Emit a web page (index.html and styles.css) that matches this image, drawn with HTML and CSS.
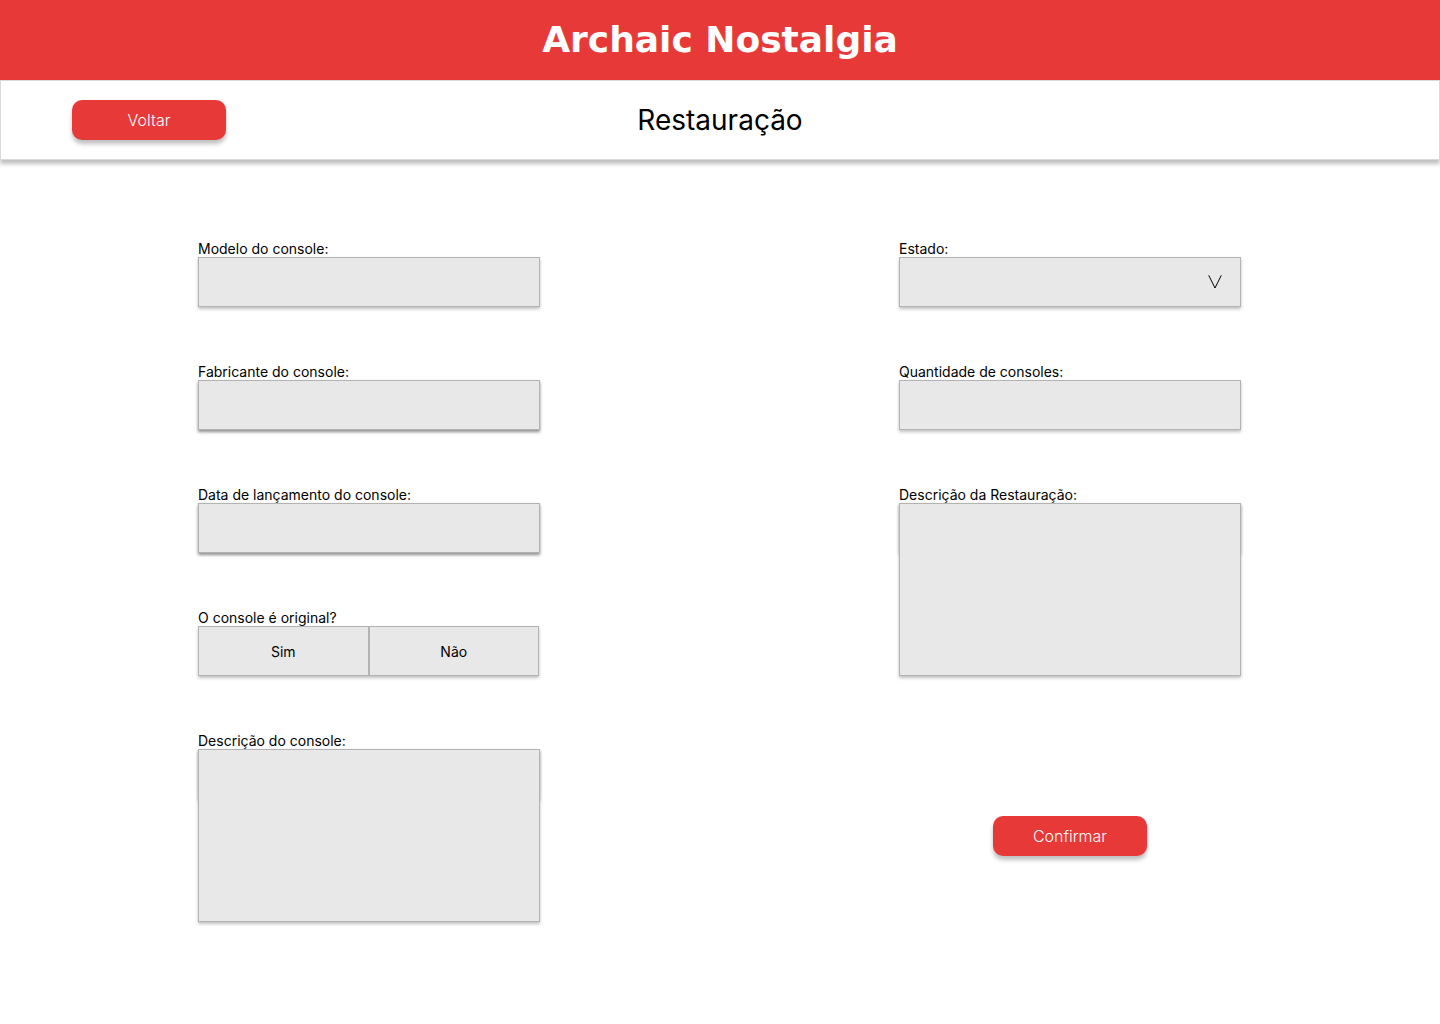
FILE: index.html
```html
<!DOCTYPE html>
<html lang="pt-BR">
<head>
  <meta charset="utf-8">
  <meta name="viewport" content="width=device-width, initial-scale=1">
  <title>Archaic Nostalgia - Restauração</title>
  <link rel="stylesheet" href="styles.css">
</head>
<body>
  <header class="brand">Archaic Nostalgia</header>
  <nav class="toolbar">
    <button class="button" type="button">Voltar</button>
    <h1 class="page-title">Restauração</h1>
  </nav>
  <main>
    <form class="form">
      <div class="column">
        <div class="field">
          <label for="modelo">Modelo do console:</label>
          <input class="control" id="modelo" type="text">
        </div>
        <div class="field">
          <label for="fabricante">Fabricante do console:</label>
          <input class="control control-raised" id="fabricante" type="text">
        </div>
        <div class="field">
          <label for="data">Data de lançamento do console:</label>
          <input class="control control-raised" id="data" type="text">
        </div>
        <fieldset class="field">
          <legend>O console é original?</legend>
          <div class="choices">
            <label class="choice"><input type="radio" name="original" value="sim">Sim</label>
            <label class="choice"><input type="radio" name="original" value="nao">Não</label>
          </div>
        </fieldset>
        <div class="field">
          <label for="descricao">Descrição do console:</label>
          <div class="area"><textarea class="control" id="descricao"></textarea></div>
        </div>
      </div>
      <div class="column">
        <div class="field">
          <label for="estado">Estado:</label>
          <div class="select">
            <select class="control" id="estado"><option value=""></option></select>
            <svg class="arrow" viewBox="0 0 14 14" aria-hidden="true"><path d="M.7.3 7 13 13.3.3"/></svg>
          </div>
        </div>
        <div class="field">
          <label for="quantidade">Quantidade de consoles:</label>
          <input class="control" id="quantidade" type="text">
        </div>
        <div class="field">
          <label for="restauracao">Descrição da Restauração:</label>
          <div class="area"><textarea class="control" id="restauracao"></textarea></div>
        </div>
        <button class="button confirm" type="submit">Confirmar</button>
      </div>
    </form>
  </main>
</body>
</html>
```
FILE: styles.css
```css
* {
  box-sizing: border-box;
}

body {
  margin: 0;
  background: #fff;
  color: #000;
  font: 14px/17px Inter, sans-serif;
}

.brand {
  display: flex;
  align-items: center;
  justify-content: center;
  min-height: 80px;
  background: #e73938;
  color: #fff;
  font: bold 36px/40px "DejaVu Sans", sans-serif;
}

.toolbar {
  display: grid;
  grid-template-columns: 1fr auto 1fr;
  align-items: center;
  min-height: 80px;
  padding: 0 71px;
  border: 1px solid #d9d9d9;
  background: #fff;
  box-shadow: 0 4px 4px rgba(0, 0, 0, 0.25);
}

.page-title {
  margin: 0;
  font-size: 28px;
  font-weight: 400;
  line-height: 36px;
}

.button {
  justify-self: start;
  width: 154px;
  height: 40px;
  padding: 0;
  border: 0;
  border-radius: 10px;
  background: #e73938;
  box-shadow: 0 4px 4px rgba(0, 0, 0, 0.25);
  color: #fff;
  font: 300 16px/20px Inter, sans-serif;
  cursor: pointer;
}

.form {
  display: flex;
  flex-wrap: wrap;
  justify-content: space-between;
  padding: 80px 199px 80px 198px;
}

.column {
  display: flex;
  flex-direction: column;
  gap: 56px;
  width: 342px;
}

.field {
  display: flex;
  flex-direction: column;
  min-width: 0;
  margin: 0;
  padding: 0;
  border: 0;
}

legend {
  padding: 0;
}

.control {
  display: block;
  width: 100%;
  height: 50px;
  margin: 0;
  padding: 0 16px;
  border: 1px solid #b3b3b3;
  border-radius: 0;
  background: #e8e8e8;
  box-shadow: 0 2px 3px rgba(0, 0, 0, 0.25);
  color: #000;
  font: inherit;
  appearance: none;
}

.control-raised {
  box-shadow: 0 2px 3px rgba(0, 0, 0, 0.45);
}

.area {
  position: relative;
}

.area::before {
  content: "";
  position: absolute;
  inset: 0 0 auto;
  height: 50px;
  box-shadow: 0 2px 3px rgba(0, 0, 0, 0.25);
}

.area .control {
  position: relative;
  height: 173px;
  padding: 16px;
  resize: none;
}

.select {
  position: relative;
}

.arrow {
  position: absolute;
  top: 18px;
  right: 19px;
  width: 14px;
  height: 14px;
  fill: none;
  stroke: #000;
  pointer-events: none;
}

.choices {
  display: grid;
  grid-template-columns: 1fr 1fr;
  height: 50px;
  margin-right: 1px;
  box-shadow: 0 2px 3px rgba(0, 0, 0, 0.25);
}

.choice {
  display: flex;
  align-items: center;
  justify-content: center;
  border: 1px solid #b3b3b3;
  background: #e8e8e8;
  cursor: pointer;
}

.choice input {
  appearance: none;
  width: 0;
  margin: 0;
}

.confirm {
  align-self: center;
  margin-top: 84px;
}

@media (max-width: 1100px) {
  .form {
    justify-content: center;
    gap: 56px;
    padding: 80px 24px;
  }
}
```
